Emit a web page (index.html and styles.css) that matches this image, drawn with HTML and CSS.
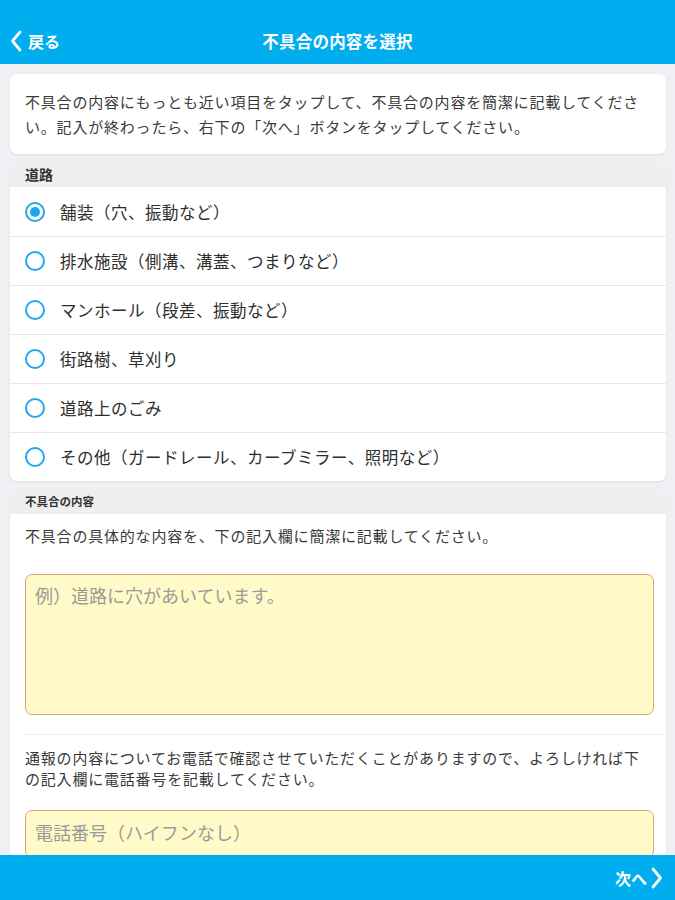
FILE: index.html
```html
<!DOCTYPE html>
<html lang="ja">
<head>
<meta charset="utf-8">
<title>不具合の内容を選択</title>
<link rel="stylesheet" href="styles.css">
</head>
<body>
<div class="app">
  <header class="topbar">
    <div class="back">
      <svg class="chev" width="12" height="22" viewBox="0 0 12 22"><path d="M10 2 L2.5 11 L10 20" fill="none" stroke="#fff" stroke-width="2.8" stroke-linecap="round" stroke-linejoin="round"/></svg>
      <span>戻る</span>
    </div>
    <div class="title">不具合の内容を選択</div>
  </header>

  <main class="content">
    <section class="card intro">
      <p>不具合の内容にもっとも近い項目をタップして、不具合の内容を簡潔に記載してください。記入が終わったら、右下の「次へ」ボタンをタップしてください。</p>
    </section>

    <section class="card group">
      <div class="group-head">道路</div>
      <ul class="options">
        <li class="option"><span class="radio checked"></span><span>舗装（穴、振動など）</span></li>
        <li class="option"><span class="radio"></span><span>排水施設（側溝、溝蓋、つまりなど）</span></li>
        <li class="option"><span class="radio"></span><span>マンホール（段差、振動など）</span></li>
        <li class="option"><span class="radio"></span><span>街路樹、草刈り</span></li>
        <li class="option"><span class="radio"></span><span>道路上のごみ</span></li>
        <li class="option"><span class="radio"></span><span>その他（ガードレール、カーブミラー、照明など）</span></li>
      </ul>
    </section>

    <section class="card group">
      <div class="group-head small">不具合の内容</div>
      <div class="form">
        <p class="note">不具合の具体的な内容を、下の記入欄に簡潔に記載してください。</p>
        <div class="textarea placeholder">例）道路に穴があいています。</div>
        <div class="divider"></div>
        <p class="note tight">通報の内容についてお電話で確認させていただくことがありますので、よろしければ下の記入欄に電話番号を記載してください。</p>
        <div class="input placeholder">電話番号（ハイフンなし）</div>
      </div>
    </section>
  </main>

  <footer class="bottombar">
    <div class="next">
      <span>次へ</span>
      <svg class="chev" width="12" height="22" viewBox="0 0 12 22"><path d="M2 2 L9.5 11 L2 20" fill="none" stroke="#fff" stroke-width="2.8" stroke-linecap="round" stroke-linejoin="round"/></svg>
    </div>
  </footer>
</div>
</body>
</html>
```

FILE: styles.css
```css
* { box-sizing: border-box; margin: 0; padding: 0; }
html, body { width: 675px; height: 900px; overflow: hidden; }
body {
  font-family: "Noto Sans CJK JP", "Noto Sans", sans-serif;
  color: #333;
  background: #efeff4;
}
.app {
  display: flex;
  flex-direction: column;
  height: 900px;
}
.topbar {
  flex: 0 0 64px;
  background: #00adee;
  color: #fff;
  display: grid;
  grid-template-columns: 1fr auto 1fr;
  align-items: center;
  padding: 18px 10px 0;
}
.back {
  display: flex;
  align-items: center;
  gap: 6px;
  font-size: 16px;
  font-weight: 700;
}
.title {
  font-size: 16.5px;
  font-weight: 700;
  letter-spacing: 0.2px;
}
.content {
  flex: 1;
  overflow: hidden;
  padding: 10px 9px 0 10px;
  display: flex;
  flex-direction: column;
  gap: 7px;
}
.card {
  background: #fff;
  border-radius: 7px;
  box-shadow: 0 1px 2px rgba(0,0,0,0.08);
  overflow: hidden;
  flex-shrink: 0;
}
.intro {
  padding: 15px 15px;
}
.intro p, .note {
  font-size: 15px;
  letter-spacing: 0.8px;
  line-height: 25px;
  color: #3a3a3a;
}
.note.tight { line-height: 21px; }
.group-head {
  background: #efefef;
  height: 26px;
  line-height: 26px;
  padding-left: 15px;
  font-size: 14px;
  font-weight: 700;
  color: #333;
}
.group-head.small {
  font-size: 11.5px;
}
.options { list-style: none; }
.option {
  height: 49px;
  display: flex;
  align-items: center;
  gap: 15px;
  padding-left: 15px;
  font-size: 16.5px;
  letter-spacing: 0.5px;
  color: #2e2e2e;
}
.option + .option { border-top: 1px solid #e6e6e6; }
.radio {
  width: 20px;
  height: 20px;
  border-radius: 50%;
  border: 2px solid #1ea8ec;
  display: flex;
  align-items: center;
  justify-content: center;
  flex-shrink: 0;
}
.radio.checked::after {
  content: "";
  width: 10px;
  height: 10px;
  border-radius: 50%;
  background: #1ea8ec;
}
.form {
  padding: 9px 0 0 15px;
  display: flex;
  flex-direction: column;
}
.form .note { padding-right: 12px; }
.textarea, .input {
  margin-right: 12px;
  background: #fffac8;
  border: 1.5px solid #d9a67c;
  border-radius: 7px;
  font-size: 18px;
  padding: 7px 9px;
}
.textarea {
  margin-top: 26px;
  height: 141px;
}
.input {
  margin-top: 21px;
  height: 48px;
  padding-top: 8px;
}
.placeholder { color: #9a9a9a; }
.divider {
  height: 1px;
  background: #ececec;
  margin: 19px 0 12px;
}
.bottombar {
  flex: 0 0 45px;
  background: #00adee;
  color: #fff;
  display: flex;
  justify-content: flex-end;
  align-items: center;
  padding-right: 12px;
}
.next {
  display: flex;
  align-items: center;
  gap: 4px;
  font-size: 16px;
  font-weight: 700;
}
```
